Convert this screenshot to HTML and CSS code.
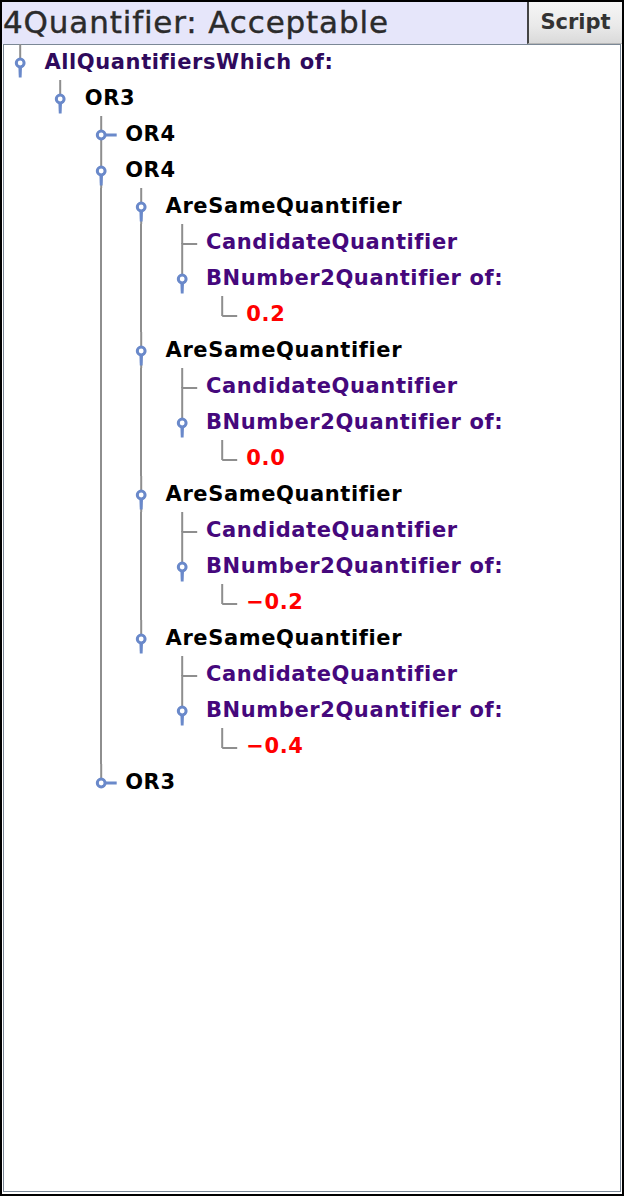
FILE: index.html
```html
<!DOCTYPE html>
<html>
<head>
<meta charset="utf-8">
<link rel="stylesheet" href="styles.css">
</head>
<body>
<svg class="defs" width="0" height="0">
  <defs>
    <symbol id="up" viewBox="0 0 40 36"><line x1="16" y1="0" x2="16" y2="20" stroke="#8e8e8e" stroke-width="2"/></symbol>
    <symbol id="down" viewBox="0 0 40 36"><line x1="16" y1="19" x2="16" y2="36" stroke="#8e8e8e" stroke-width="2"/></symbol>
    <symbol id="leaf" viewBox="0 0 40 36"><line x1="16" y1="20" x2="31" y2="20" stroke="#8e8e8e" stroke-width="2"/></symbol>
    <symbol id="exp" viewBox="0 0 40 36"><path d="M14.2 23 L14.6 33.5 L17.4 33.5 L17.8 23 Z" fill="#6a89ca"/><circle cx="16" cy="19" r="3.9" fill="#fff" stroke="#6a89ca" stroke-width="3"/></symbol>
    <symbol id="col" viewBox="0 0 40 36"><line x1="19" y1="19" x2="31.5" y2="19" stroke="#6a89ca" stroke-width="3"/><circle cx="16" cy="19" r="3.9" fill="#fff" stroke="#6a89ca" stroke-width="3"/></symbol>
  </defs>
</svg>
<div class="window">
  <div class="titlebar">
    <div class="title">4Quantifier: Acceptable</div>
    <div class="btn">Script</div>
  </div>
  <div class="panel">
    <div class="row"><svg class="h"><use href="#up"/><use href="#exp"/></svg><span class="t root">AllQuantifiersWhich of:</span></div>
    <div class="row"><span class="g"></span><svg class="h"><use href="#up"/><use href="#exp"/></svg><span class="t">OR3</span></div>
    <div class="row"><span class="g"></span><span class="g"></span><svg class="h"><use href="#up"/><use href="#down"/><use href="#col"/></svg><span class="t">OR4</span></div>
    <div class="row"><span class="g"></span><span class="g"></span><svg class="h"><use href="#up"/><use href="#down"/><use href="#exp"/></svg><span class="t">OR4</span></div>

    <div class="row"><span class="g"></span><span class="g"></span><span class="g v"></span><svg class="h"><use href="#up"/><use href="#down"/><use href="#exp"/></svg><span class="t">AreSameQuantifier</span></div>
    <div class="row"><span class="g"></span><span class="g"></span><span class="g v"></span><span class="g v"></span><svg class="h"><use href="#up"/><use href="#down"/><use href="#leaf"/></svg><span class="t fn">CandidateQuantifier</span></div>
    <div class="row"><span class="g"></span><span class="g"></span><span class="g v"></span><span class="g v"></span><svg class="h"><use href="#up"/><use href="#exp"/></svg><span class="t fn">BNumber2Quantifier of:</span></div>
    <div class="row"><span class="g"></span><span class="g"></span><span class="g v"></span><span class="g v"></span><span class="g"></span><svg class="h"><use href="#up"/><use href="#leaf"/></svg><span class="t num">0.2</span></div>

    <div class="row"><span class="g"></span><span class="g"></span><span class="g v"></span><svg class="h"><use href="#up"/><use href="#down"/><use href="#exp"/></svg><span class="t">AreSameQuantifier</span></div>
    <div class="row"><span class="g"></span><span class="g"></span><span class="g v"></span><span class="g v"></span><svg class="h"><use href="#up"/><use href="#down"/><use href="#leaf"/></svg><span class="t fn">CandidateQuantifier</span></div>
    <div class="row"><span class="g"></span><span class="g"></span><span class="g v"></span><span class="g v"></span><svg class="h"><use href="#up"/><use href="#exp"/></svg><span class="t fn">BNumber2Quantifier of:</span></div>
    <div class="row"><span class="g"></span><span class="g"></span><span class="g v"></span><span class="g v"></span><span class="g"></span><svg class="h"><use href="#up"/><use href="#leaf"/></svg><span class="t num">0.0</span></div>

    <div class="row"><span class="g"></span><span class="g"></span><span class="g v"></span><svg class="h"><use href="#up"/><use href="#down"/><use href="#exp"/></svg><span class="t">AreSameQuantifier</span></div>
    <div class="row"><span class="g"></span><span class="g"></span><span class="g v"></span><span class="g v"></span><svg class="h"><use href="#up"/><use href="#down"/><use href="#leaf"/></svg><span class="t fn">CandidateQuantifier</span></div>
    <div class="row"><span class="g"></span><span class="g"></span><span class="g v"></span><span class="g v"></span><svg class="h"><use href="#up"/><use href="#exp"/></svg><span class="t fn">BNumber2Quantifier of:</span></div>
    <div class="row"><span class="g"></span><span class="g"></span><span class="g v"></span><span class="g v"></span><span class="g"></span><svg class="h"><use href="#up"/><use href="#leaf"/></svg><span class="t num">&minus;0.2</span></div>

    <div class="row"><span class="g"></span><span class="g"></span><span class="g v"></span><svg class="h"><use href="#up"/><use href="#exp"/></svg><span class="t">AreSameQuantifier</span></div>
    <div class="row"><span class="g"></span><span class="g"></span><span class="g v"></span><span class="g"></span><svg class="h"><use href="#up"/><use href="#down"/><use href="#leaf"/></svg><span class="t fn">CandidateQuantifier</span></div>
    <div class="row"><span class="g"></span><span class="g"></span><span class="g v"></span><span class="g"></span><svg class="h"><use href="#up"/><use href="#exp"/></svg><span class="t fn">BNumber2Quantifier of:</span></div>
    <div class="row"><span class="g"></span><span class="g"></span><span class="g v"></span><span class="g"></span><span class="g"></span><svg class="h"><use href="#up"/><use href="#leaf"/></svg><span class="t num">&minus;0.4</span></div>

    <div class="row"><span class="g"></span><span class="g"></span><svg class="h"><use href="#up"/><use href="#col"/></svg><span class="t">OR3</span></div>
  </div>
</div>
</body>
</html>
```

FILE: styles.css
```css
html, body {
  margin: 0;
  padding: 0;
  background: #000;
}
.defs {
  position: absolute;
  width: 0;
  height: 0;
}
.window {
  width: 624px;
  height: 1196px;
  box-sizing: border-box;
  border: 2px solid #000;
  background: #fff;
  display: flex;
  flex-direction: column;
}
.titlebar {
  height: 42px;
  display: flex;
  background: #e6e6fa;
  flex: none;
}
.title {
  flex: 1;
  font-family: "DejaVu Sans", sans-serif;
  font-size: 31px;
  color: #2b2b2b;
  line-height: 40px;
  padding-left: 1px;
  white-space: nowrap;
  letter-spacing: 0.85px;
  -webkit-text-stroke: 0.4px #2b2b2b;
}
.btn {
  width: 95px;
  border-left: 2px solid #444;
  background: linear-gradient(#f6f6f6, #e9e9e9 60%, #dadada);
  font-family: "DejaVu Sans", sans-serif;
  font-weight: bold;
  font-size: 21px;
  color: #333;
  text-align: center;
  line-height: 40px;
  border-bottom: 1px solid #b8b8b8;
  box-sizing: border-box;
}
.panel {
  flex: 1;
  margin: 0 1px 2px 1px;
  border: 1px solid #7b8896;
  background: #fff;
}
.row {
  height: 36px;
  display: flex;
  align-items: center;
  margin-top: -1px;
  margin-bottom: 1px;
}
.g {
  width: 40.4px;
  height: 36px;
  flex: none;
}
.g.v {
  background: linear-gradient(#8e8e8e, #8e8e8e) no-repeat 15px 0 / 2px 100%;
}
.h {
  width: 40.4px;
  height: 36px;
  flex: none;
  overflow: visible;
}
.t {
  font-family: "DejaVu Sans", sans-serif;
  font-weight: bold;
  font-size: 21px;
  letter-spacing: 0.6px;
  color: #000;
  white-space: nowrap;
  margin-top: -1px;
}
.root { color: #2f0a5c; }
.fn { color: #45087c; }
.num { color: #ff0000; }
```
